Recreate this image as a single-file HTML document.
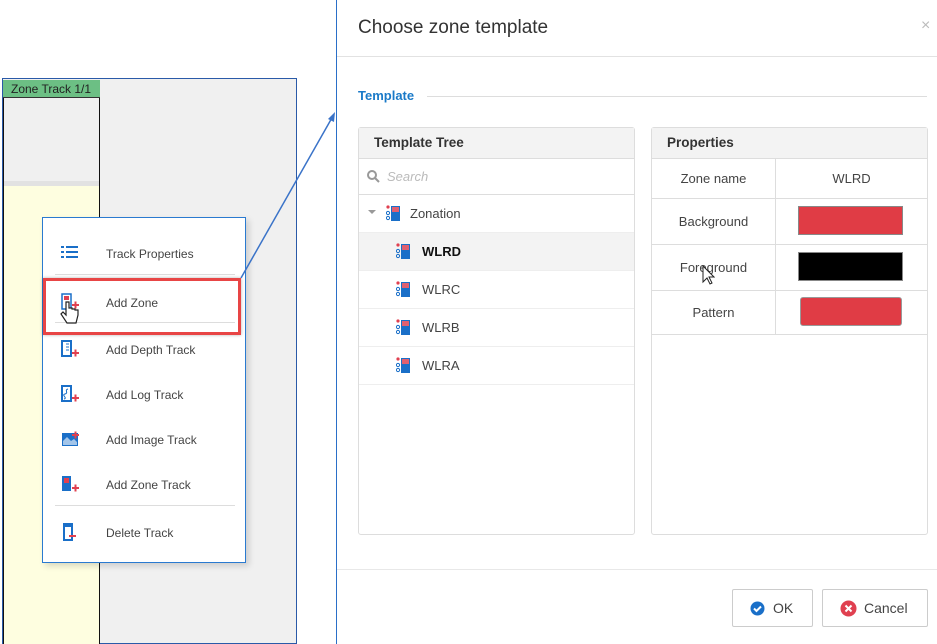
<!DOCTYPE html>
<html><head><style>
*{box-sizing:border-box;margin:0;padding:0}
body{width:937px;height:644px;overflow:hidden;background:#fff;font-family:"Liberation Sans",sans-serif;position:relative;color:#333}
.a{position:absolute}
.mi{position:absolute;left:0;width:203px;height:20px;font-size:12px;color:#444}
.mi span{position:absolute;left:63px;top:3px}
.mi svg{position:absolute;left:18px;top:0}
.tr{position:absolute;left:0;width:275px;height:38px;border-bottom:1px solid #eee;font-size:13px;color:#444}
.tr span{position:absolute;left:63px;top:11px}
.tr svg{position:absolute;left:37px;top:10px}
.pr{position:absolute;left:0;width:275px;border-bottom:1px solid #ddd;font-size:13px;color:#444}
.pr .l{position:absolute;left:0;width:124px;text-align:center;border-right:1px solid #ddd;height:100%}
</style></head><body>
<div class="a" style="left:2px;top:78px;width:295px;height:566px;border:1px solid #2a5aa8;background:#f0f0f0"></div>
<div class="a" style="left:3px;top:80px;width:97px;height:564px;border-right:1px solid #111;border-left:1px solid #111;background:#f0f0f0"></div>
<div class="a" style="left:3px;top:80px;width:97px;height:18px;background:#6cbf84;border-bottom:1px solid #333;font-size:12px;color:#222;padding:2px 0 0 8px">Zone Track 1/1</div>
<div class="a" style="left:4px;top:181px;width:95px;height:5px;background:#e2e2e2"></div>
<div class="a" style="left:4px;top:186px;width:95px;height:458px;background:#fefee0"></div>
<div class="a" style="left:42px;top:217px;width:204px;height:346px;background:#fff;border:1px solid #2a7ad0;box-shadow:3px 3px 6px rgba(0,0,0,.15)">
 <div class="mi" style="top:26px"><svg width="18" height="16"><g fill="#1a6fc8"><rect x="0" y="2" width="3" height="2"/><rect x="5" y="2" width="12" height="2"/><rect x="0" y="7" width="3" height="2"/><rect x="5" y="7" width="12" height="2"/><rect x="0" y="12" width="3" height="2"/><rect x="5" y="12" width="12" height="2"/></g></svg><span>Track Properties</span></div>
 <div class="a" style="left:12px;top:56px;width:180px;height:1px;background:#ddd"></div>
 <div class="mi" style="top:75px"><svg width="20" height="20"><rect x="1" y="1" width="9" height="15" fill="none" stroke="#1a6fc8" stroke-width="1.5"/><rect x="3" y="3" width="5" height="4" fill="#e04050"/><path d="M11 12h7M14.5 8.5v7" stroke="#e04050" stroke-width="2"/></svg><span>Add Zone</span></div>
 <div class="a" style="left:12px;top:104px;width:180px;height:1px;background:#ddd"></div>
 <div class="mi" style="top:122px"><svg width="20" height="20"><rect x="1" y="1" width="9" height="15" fill="none" stroke="#1a6fc8" stroke-width="2"/><path d="M5 4h3M5 7h3M5 10h3" stroke="#1a6fc8"/><path d="M11 13h7M14.5 9.5v7" stroke="#e04050" stroke-width="2"/></svg><span>Add Depth Track</span></div>
 <div class="mi" style="top:167px"><svg width="20" height="20"><rect x="1" y="1" width="9" height="15" fill="none" stroke="#1a6fc8" stroke-width="2"/><path d="M7 4C3 5 8 8 4 9s3 4-1 5" stroke="#1a6fc8" fill="none"/><path d="M11 13h7M14.5 9.5v7" stroke="#e04050" stroke-width="2"/></svg><span>Add Log Track</span></div>
 <div class="mi" style="top:212px"><svg width="20" height="20"><rect x="1" y="3" width="16" height="13" fill="#1a6fc8"/><path d="M2 11l4-4 4 4 3-2 3 3v3H2z" fill="#fff" opacity=".6"/><path d="M11 5h7M14.5 1.5v7" stroke="#e04050" stroke-width="2"/></svg><span>Add Image Track</span></div>
 <div class="mi" style="top:257px"><svg width="20" height="20"><rect x="1" y="1" width="9" height="15" fill="#1a6fc8"/><rect x="3" y="3" width="5" height="5" fill="#e04050"/><path d="M11 13h7M14.5 9.5v7" stroke="#e04050" stroke-width="2"/></svg><span>Add Zone Track</span></div>
 <div class="a" style="left:12px;top:287px;width:180px;height:1px;background:#ddd"></div>
 <div class="mi" style="top:305px"><svg width="20" height="20"><rect x="3" y="1" width="8" height="16" fill="none" stroke="#1a6fc8" stroke-width="2"/><rect x="3" y="1" width="8" height="3" fill="#1a6fc8"/><path d="M8 13h7" stroke="#e04050" stroke-width="2"/></svg><span>Delete Track</span></div>
</div>
<div class="a" style="left:43px;top:278px;width:198px;height:57px;border:3px solid #e84545;box-shadow:0 0 3px rgba(0,0,0,.3)"></div>
<svg class="a" style="left:60px;top:300px" width="22" height="28"><path d="M6 2v13l-3-3-2 2 6 9h9l2-8v-5h-3v-1h-3v-1h-3V2z" fill="#fff" stroke="#222" stroke-width="1.2"/></svg>
<svg class="a" style="left:0;top:0" width="340" height="300"><path d="M241 278L333 116" stroke="#3a73c8" stroke-width="1.5"/><path d="M335 112l-1 10-6-3z" fill="#3a73c8"/></svg>
<div class="a" style="left:336px;top:0;width:601px;height:644px;background:#fff;border-left:1px solid #2a6fc8">
 <div class="a" style="left:21px;top:17px;font-size:19px;color:#333">Choose zone template</div>
 <div class="a" style="left:584px;top:17px;font-size:16px;color:#bbb">×</div>
 <div class="a" style="left:0;top:56px;width:601px;height:1px;background:#e2e2e2"></div>
 <div class="a" style="left:21px;top:88px;font-size:13px;color:#1a7ac8;font-weight:bold">Template</div>
 <div class="a" style="left:90px;top:96px;width:500px;height:1px;background:#ddd"></div>
 <div class="a" style="left:21px;top:127px;width:277px;height:408px;border:1px solid #ddd;border-radius:3px">
  <div class="a" style="left:0;top:0;width:275px;height:31px;background:#f3f3f3;border-bottom:1px solid #ddd;font-size:13.5px;font-weight:bold;color:#333;padding:7px 0 0 15px">Template Tree</div>
  <div class="a" style="left:0;top:31px;width:275px;height:36px;border-bottom:1px solid #ddd">
   <svg class="a" style="left:7px;top:10px" width="14" height="14"><circle cx="6" cy="6" r="4" fill="none" stroke="#999" stroke-width="2"/><path d="M9 9l4 4" stroke="#999" stroke-width="2"/></svg>
   <div class="a" style="left:28px;top:10px;font-size:13px;color:#bbb;font-style:italic">Search</div>
  </div>
  <div class="tr" style="top:67px"><div class="a" style="left:9px;top:15px;border:4px solid transparent;border-top:4px solid #999"></div><svg style="left:27px" width="16" height="18"><circle cx="2" cy="2" r="1.6" fill="#e04050"/><circle cx="2" cy="8" r="1.6" fill="none" stroke="#1a6fc8"/><circle cx="2" cy="13" r="1.6" fill="none" stroke="#1a6fc8"/><rect x="5" y="1" width="9" height="15" fill="#1a6fc8"/><rect x="6" y="2" width="7" height="5" fill="#e06070"/></svg><span style="left:51px">Zonation</span></div>
  <div class="tr" style="top:105px;background:#f3f3f3"><svg width="16" height="18"><circle cx="2" cy="2" r="1.6" fill="#e04050"/><circle cx="2" cy="8" r="1.6" fill="none" stroke="#1a6fc8"/><circle cx="2" cy="13" r="1.6" fill="none" stroke="#1a6fc8"/><rect x="5" y="1" width="9" height="15" fill="#1a6fc8"/><rect x="6" y="2" width="7" height="5" fill="#e06070"/></svg><span style="font-weight:bold;color:#111">WLRD</span></div>
  <div class="tr" style="top:143px"><svg width="16" height="18"><circle cx="2" cy="2" r="1.6" fill="#e04050"/><circle cx="2" cy="8" r="1.6" fill="none" stroke="#1a6fc8"/><circle cx="2" cy="13" r="1.6" fill="none" stroke="#1a6fc8"/><rect x="5" y="1" width="9" height="15" fill="#1a6fc8"/><rect x="6" y="2" width="7" height="5" fill="#e06070"/></svg><span>WLRC</span></div>
  <div class="tr" style="top:181px"><svg width="16" height="18"><circle cx="2" cy="2" r="1.6" fill="#e04050"/><circle cx="2" cy="8" r="1.6" fill="none" stroke="#1a6fc8"/><circle cx="2" cy="13" r="1.6" fill="none" stroke="#1a6fc8"/><rect x="5" y="1" width="9" height="15" fill="#1a6fc8"/><rect x="6" y="2" width="7" height="5" fill="#e06070"/></svg><span>WLRB</span></div>
  <div class="tr" style="top:219px"><svg width="16" height="18"><circle cx="2" cy="2" r="1.6" fill="#e04050"/><circle cx="2" cy="8" r="1.6" fill="none" stroke="#1a6fc8"/><circle cx="2" cy="13" r="1.6" fill="none" stroke="#1a6fc8"/><rect x="5" y="1" width="9" height="15" fill="#1a6fc8"/><rect x="6" y="2" width="7" height="5" fill="#e06070"/></svg><span>WLRA</span></div>
 </div>
 <div class="a" style="left:314px;top:127px;width:277px;height:408px;border:1px solid #ddd;border-radius:3px">
  <div class="a" style="left:0;top:0;width:275px;height:31px;background:#f3f3f3;border-bottom:1px solid #ddd;font-size:13.5px;font-weight:bold;color:#333;padding:7px 0 0 15px">Properties</div>
  <div class="pr" style="top:31px;height:40px"><div class="l" style="padding-top:12px">Zone name</div><div class="a" style="left:124px;width:151px;text-align:center;top:12px">WLRD</div></div>
  <div class="pr" style="top:71px;height:46px"><div class="l" style="padding-top:15px">Background</div><div class="a" style="left:146px;top:7px;width:105px;height:29px;background:#e03c45;border:1px solid #888"></div></div>
  <div class="pr" style="top:117px;height:46px"><div class="l" style="padding-top:15px">Foreground</div><div class="a" style="left:146px;top:7px;width:105px;height:29px;background:#000;border:1px solid #888"></div></div>
  <div class="pr" style="top:163px;height:44px"><div class="l" style="padding-top:14px">Pattern</div><div class="a" style="left:148px;top:6px;width:102px;height:29px;background:#e03c45;border:1px solid #999;border-radius:3px"></div></div>
 </div>
 <svg class="a" style="left:364px;top:265px" width="14" height="22"><path d="M2 1v16l4-4 3 6 2-1-3-6h5z" fill="#fff" stroke="#222"/></svg>
 <div class="a" style="left:0;top:569px;width:601px;height:1px;background:#e8e8e8"></div>
 <div class="a" style="left:395px;top:589px;width:81px;height:38px;border:1px solid #ccc;border-radius:2px;font-size:14px;color:#444">
  <svg class="a" style="left:17px;top:11px" width="15" height="15"><circle cx="7.5" cy="7.5" r="7" fill="#1a6fc8"/><path d="M4 7.5l2.5 2.5 4.5-4.5" stroke="#fff" stroke-width="2" fill="none"/></svg>
  <span class="a" style="left:40px;top:10px">OK</span></div>
 <div class="a" style="left:485px;top:589px;width:106px;height:38px;border:1px solid #ccc;border-radius:2px;font-size:14px;color:#444">
  <svg class="a" style="left:17px;top:10px" width="17" height="17"><circle cx="8.5" cy="8.5" r="8" fill="#e04050"/><path d="M5.5 5.5l6 6M11.5 5.5l-6 6" stroke="#fff" stroke-width="2"/></svg>
  <span class="a" style="left:41px;top:10px">Cancel</span></div>
</div>
</body></html>
